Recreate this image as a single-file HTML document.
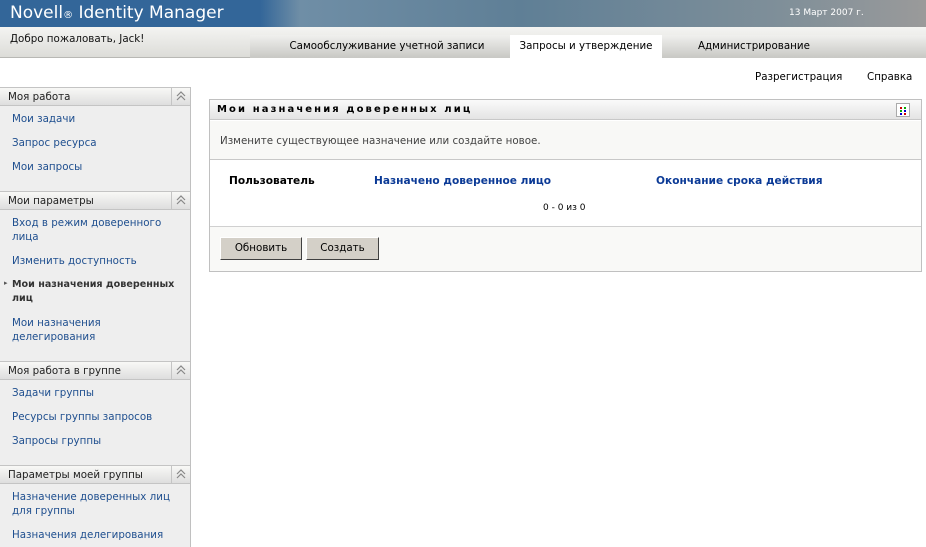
<!DOCTYPE html>
<html><head><meta charset="utf-8"><style>
*{margin:0;padding:0;box-sizing:border-box}
body{width:926px;height:540px;overflow:hidden;background:#fff;font-family:"DejaVu Sans","Liberation Sans",sans-serif;font-size:10.3px;position:relative}
.a{position:absolute;white-space:nowrap}
#hdr{left:0;top:0;width:926px;height:27px;background:linear-gradient(90deg,#336699 0,#336699 260px,#6f8ea6 300px,#5f7f96 520px,#7f8f99 780px,#9a9a9a 926px)}
#sub{left:0;top:27px;width:926px;height:31px;background:linear-gradient(#f4f4f2,#dcdcd8);border-bottom:1px solid #b8b8b4}
.tab{top:35px;height:23px;padding-top:5px;text-align:center;font-size:10.3px;color:#000;background:linear-gradient(#f0f0ee,#c8c8c4)}
#side{left:0;top:87px;width:191px;height:460px;background:#eeeeee;border-right:1px solid #c0c0c0}
.sh{position:absolute;left:0;width:190px;height:19px;background:linear-gradient(#f8f8f6,#dedede);border-top:1px solid #c4c4c4;border-bottom:1px solid #c4c4c4;font-size:10.3px;padding:3px 0 0 8px;color:#222}
.sh i{position:absolute;right:0;top:0;width:19px;height:17px;border-left:1px solid #c4c4c4}
.l{position:absolute;left:12px;color:#1f4f8f;font-size:10.3px;line-height:14px}
#pn{left:209px;top:99px;width:713px;height:173px;border:1px solid #c0c0c0;background:#fff}
</style></head><body>
<div class="a" id="hdr"></div>
<div class="a" style="left:10px;top:3px;font-size:17px;color:#fff">Novell<span style="font-size:10px">®</span> Identity Manager</div>
<div class="a" style="left:789px;top:8px;font-size:9px;color:#fff">13 Март 2007 г.</div>
<div class="a" id="sub"></div>
<div class="a" style="left:10px;top:33px;color:#111">Добро пожаловать, Jack!</div>
<div class="a tab" style="left:250px;width:260px;padding-left:14px">Самообслуживание учетной записи</div>
<div class="a tab" style="left:510px;width:152px;background:#fff">Запросы и утверждение</div>
<div class="a tab" style="left:662px;width:264px;text-align:left;padding-left:36px">Администрирование</div>
<div class="a" style="left:755px;top:71px;color:#000">Разрегистрация</div>
<div class="a" style="left:867px;top:71px;color:#000">Справка</div>

<div class="a" id="side">
<div class="sh" style="top:0">Моя работа<i><svg width="18" height="17"><path d="M5 8l4-4 4 4M5 12l4-4 4 4" fill="none" stroke="#888" stroke-width="1.2"/></svg></i></div>
<div class="l" style="top:25px">Мои задачи</div>
<div class="l" style="top:49px">Запрос ресурса</div>
<div class="l" style="top:73px">Мои запросы</div>
<div class="sh" style="top:104px">Мои параметры<i><svg width="18" height="17"><path d="M5 8l4-4 4 4M5 12l4-4 4 4" fill="none" stroke="#888" stroke-width="1.2"/></svg></i></div>
<div class="l" style="top:129px">Вход в режим доверенного<br>лица</div>
<div class="l" style="top:167px">Изменить доступность</div>
<div class="l" style="top:191px;color:#333;font-weight:bold;font-size:9.6px">Мои назначения доверенных<br>лиц</div>
<div class="a" style="left:4px;top:192px;font-size:7px;color:#555">▸</div>
<div class="l" style="top:229px">Мои назначения<br>делегирования</div>
<div class="sh" style="top:274px">Моя работа в группе<i><svg width="18" height="17"><path d="M5 8l4-4 4 4M5 12l4-4 4 4" fill="none" stroke="#888" stroke-width="1.2"/></svg></i></div>
<div class="l" style="top:299px">Задачи группы</div>
<div class="l" style="top:323px">Ресурсы группы запросов</div>
<div class="l" style="top:347px">Запросы группы</div>
<div class="sh" style="top:378px">Параметры моей группы<i><svg width="18" height="17"><path d="M5 8l4-4 4 4M5 12l4-4 4 4" fill="none" stroke="#888" stroke-width="1.2"/></svg></i></div>
<div class="l" style="top:403px">Назначение доверенных лиц<br>для группы</div>
<div class="l" style="top:441px">Назначения делегирования</div>
</div>

<div class="a" id="pn">
<div style="position:absolute;left:0;top:0;width:711px;height:20px;background:linear-gradient(#fafafa,#e4e4e4);border-bottom:1px solid #c8c8c8"></div>
<div class="a" style="left:7px;top:4px;font-weight:bold;font-size:10px;letter-spacing:2.1px;color:#000">Мои назначения доверенных лиц</div>
<div class="a" style="left:686px;top:3px;width:14px;height:14px;border:1px solid #aaa;background:#fff"><svg width="12" height="12" style="position:absolute;left:0;top:0"><rect x="3" y="3" width="2" height="2" fill="#c00"/><rect x="7" y="3" width="2" height="2" fill="#0a0"/><rect x="3" y="6" width="2" height="2" fill="#0a0"/><rect x="7" y="6" width="2" height="2" fill="#00c"/><rect x="3" y="9" width="2" height="2" fill="#00c"/><rect x="7" y="9" width="2" height="2" fill="#c00"/></svg></div>
<div style="position:absolute;left:0;top:21px;width:711px;height:39px;background:#f8f8f6;border-bottom:1px solid #c8c8c8"></div>
<div class="a" style="left:10px;top:35px;color:#444">Измените существующее назначение или создайте новое.</div>
<div class="a" style="left:19px;top:75px;font-weight:bold;font-size:10.6px;color:#000">Пользователь</div>
<div class="a" style="left:164px;top:75px;font-weight:bold;font-size:10.6px;color:#0b3a96">Назначено доверенное лицо</div>
<div class="a" style="left:446px;top:75px;font-weight:bold;font-size:10.6px;color:#0b3a96">Окончание срока действия</div>
<div class="a" style="left:333px;top:103px;font-size:9px;color:#000">0 - 0 из 0</div>
<div style="position:absolute;left:0;top:126px;width:711px;height:45px;background:#f9f9f7;border-top:1px solid #d0d0d0"></div>
<div class="a" style="left:10px;top:137px;width:82px;height:23px;background:#d4d0c8;border:1px solid;border-color:#fff #404040 #404040 #fff;text-align:center;line-height:20px">Обновить</div>
<div class="a" style="left:96px;top:137px;width:73px;height:23px;background:#d4d0c8;border:1px solid;border-color:#fff #404040 #404040 #fff;text-align:center;line-height:20px">Создать</div>
</div>
</body></html>
